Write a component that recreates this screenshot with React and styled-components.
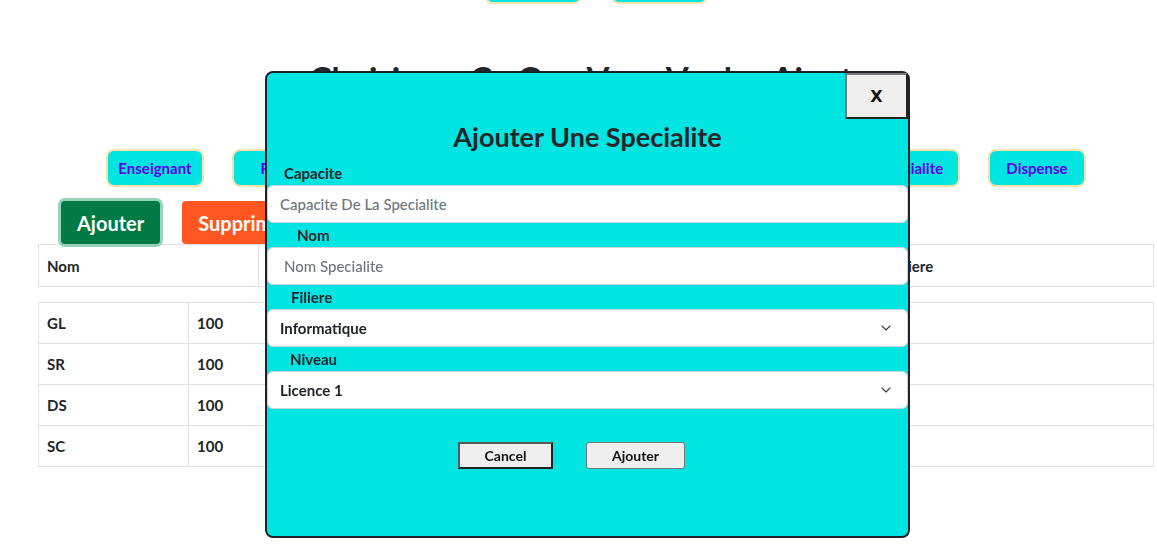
import React from 'react';
import styled, { createGlobalStyle } from 'styled-components';
import { ChevronDown } from 'lucide-react';

const CYAN = '#00e5e2';

const GlobalStyle = createGlobalStyle`
  html, body {
    margin: 0;
    padding: 0;
    background: #fff;
    font-family: Lato, "Open Sans", sans-serif;
    color: #212529;
    overflow: hidden;
  }
  * { box-sizing: border-box; }
`;

const topLinks = ['Accueil', 'Ajouter'];
const navLinks = ['Enseignant', 'Filiere', 'Module', 'Niveau', 'Salle', 'Groupe', 'Specialite', 'Dispense'];
const rows = [
  { nom: 'GL', capacite: 100 },
  { nom: 'SR', capacite: 100 },
  { nom: 'DS', capacite: 100 },
  { nom: 'SC', capacite: 100 },
];

export default function App() {
  return (
    <>
      <GlobalStyle />
      <Page>
        <TopBar>
          {topLinks.map((l) => <TopButton key={l}>{l}</TopButton>)}
        </TopBar>
        <Heading>Choisissez Ce Que Vous Voulez Ajouter</Heading>
        <NavRow>
          {navLinks.map((l) => <NavButton key={l}>{l}</NavButton>)}
        </NavRow>
        <Actions>
          <ActionButton $bg="#007a45" $ring="#95d4b6">Ajouter</ActionButton>
          <ActionButton $bg="#ff5722">Supprimer</ActionButton>
        </Actions>
        <HeadTable>
          <tbody>
            <tr>
              <HeadCell $w={220}>Nom</HeadCell>
              <HeadCell $w={302}>Capacite</HeadCell>
              <HeadCell $w={323}>Niveau</HeadCell>
              <HeadCell>Filiere</HeadCell>
            </tr>
          </tbody>
        </HeadTable>
        <BodyTable>
          <tbody>
            {rows.map((r) => (
              <tr key={r.nom}>
                <Cell $w={150}>{r.nom}</Cell>
                <Cell $w={300}>{r.capacite}</Cell>
                <Cell />
              </tr>
            ))}
          </tbody>
        </BodyTable>
      </Page>

      <Modal>
        <CloseRow>
          <CloseButton>X</CloseButton>
        </CloseRow>
        <ModalTitle>Ajouter Une Specialite</ModalTitle>
        <Label $pad={17}>Capacite</Label>
        <TextInput placeholder="Capacite De La Specialite" />
        <Label $pad={30}>Nom</Label>
        <TextInput $pad={16} placeholder="Nom Specialite" />
        <Label $pad={24}>Filiere</Label>
        <SelectWrap>
          <Select defaultValue="Informatique">
            <option>Informatique</option>
          </Select>
          <Chevron size={16} strokeWidth={1.6} />
        </SelectWrap>
        <Label $pad={23}>Niveau</Label>
        <SelectWrap>
          <Select defaultValue="Licence 1">
            <option>Licence 1</option>
          </Select>
          <Chevron size={16} strokeWidth={1.6} />
        </SelectWrap>
        <ModalFooter>
          <FormButton $focused>Cancel</FormButton>
          <FormButton>Ajouter</FormButton>
        </ModalFooter>
      </Modal>
    </>
  );
}

const Page = styled.div`
  margin-top: -34px;
  padding: 0 3px 0 38px;
`;

const TopBar = styled.div`
  display: flex;
  justify-content: center;
  gap: 29px;
`;

const TopButton = styled.button`
  width: 97px;
  height: 38px;
  background: ${CYAN};
  border: 2px solid #f7e3a6;
  border-radius: 8px;
  color: #6200ea;
  font: 700 15px Lato, sans-serif;
`;

const Heading = styled.h1`
  margin: 53px 0 0;
  text-align: center;
  font-size: 33px;
  line-height: 43px;
  font-weight: 700;
`;

const NavRow = styled.div`
  display: flex;
  justify-content: center;
  gap: 28px;
  margin-top: 49px;
`;

const NavButton = styled(TopButton)`
  width: 98px;
`;

const Actions = styled.div`
  display: flex;
  gap: 22px;
  margin: 14px 0 0 23px;
`;

const ActionButton = styled.button`
  height: 43px;
  padding: 0 16px;
  min-width: 98px;
  border: none;
  border-radius: 4px;
  background: ${(p) => p.$bg};
  color: #fff;
  font: 700 20px Lato, sans-serif;
  box-shadow: ${(p) => (p.$ring ? `0 0 0 3px ${p.$ring}` : 'none')};
`;

const HeadTable = styled.table`
  width: 100%;
  border-collapse: collapse;
  table-layout: fixed;
`;

const HeadCell = styled.td`
  width: ${(p) => (p.$w ? `${p.$w}px` : 'auto')};
  height: 42px;
  border: 1px solid #dee2e6;
  padding: 0 8px;
  font-size: 15px;
  font-weight: 700;
`;

const BodyTable = styled(HeadTable)`
  margin-top: 15px;
`;

const Cell = styled.td`
  width: ${(p) => (p.$w ? `${p.$w}px` : 'auto')};
  height: 41px;
  border: 1px solid #dee2e6;
  padding: 0 8px;
  font-size: 15px;
  font-weight: 700;
`;

const Modal = styled.div`
  position: fixed;
  left: 265px;
  top: 71px;
  width: 645px;
  height: 467px;
  background: ${CYAN};
  border: 2px solid #1f2329;
  border-radius: 8px;
  display: flex;
  flex-direction: column;
`;

const CloseRow = styled.div`
  display: flex;
  justify-content: flex-end;
`;

const CloseButton = styled.button`
  width: 63px;
  height: 46px;
  background: #efefef;
  border: 2px solid;
  border-color: #7a7a7a #222 #222 #7a7a7a;
  font: 700 16px "DejaVu Sans", sans-serif;
  color: #111;
`;

const ModalTitle = styled.h2`
  margin: 0 0 6px;
  text-align: center;
  font-size: 27px;
  line-height: 36px;
  font-weight: 700;
`;

const Label = styled.label`
  display: block;
  height: 24px;
  line-height: 24px;
  padding-left: ${(p) => p.$pad}px;
  font-size: 15px;
  font-weight: 700;
`;

const TextInput = styled.input`
  width: 100%;
  height: 38px;
  border: 1px solid #ced4da;
  border-radius: 6px;
  padding: 0 ${(p) => p.$pad || 12}px;
  background: #fff;
  font: 500 15px Lato, sans-serif;
  color: #212529;
  &::placeholder { color: #6c757d; }
`;

const SelectWrap = styled.div`
  position: relative;
`;

const Select = styled.select`
  appearance: none;
  width: 100%;
  height: 38px;
  border: 1px solid #ced4da;
  border-radius: 6px;
  padding: 0 12px;
  background: #fff;
  font: 700 15px Lato, sans-serif;
  color: #212529;
`;

const Chevron = styled(ChevronDown)`
  position: absolute;
  right: 14px;
  top: 11px;
  color: #343a40;
  pointer-events: none;
`;

const ModalFooter = styled.div`
  display: flex;
  justify-content: center;
  gap: 33px;
  margin-top: 33px;
  padding-right: 32px;
`;

const FormButton = styled.button`
  width: ${(p) => (p.$focused ? 95 : 99)}px;
  height: 27px;
  background: #efefef;
  border: ${(p) => (p.$focused ? '2px solid' : '1px solid #767676')};
  border-color: ${(p) => (p.$focused ? '#5a5a5a #222 #222 #5a5a5a' : '#767676')};
  border-radius: ${(p) => (p.$focused ? 0 : 3)}px;
  font: 700 14px Lato, sans-serif;
  color: #111;
`;
